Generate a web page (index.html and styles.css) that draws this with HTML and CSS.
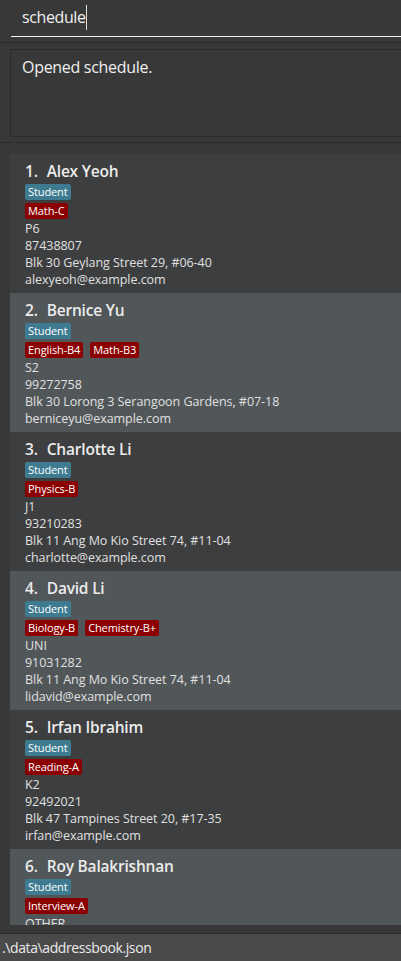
FILE: index.html
```html
<!DOCTYPE html>
<html>
<head>
<meta charset="utf-8">
<link rel="stylesheet" href="styles.css">
</head>
<body>
<div class="app">
  <div class="command-pane">
    <div class="command-field"><span class="command-text">schedule</span><span class="caret"></span></div>
  </div>
  <div class="result-pane">
    <div class="result-box">Opened schedule.</div>
  </div>
  <div class="list-pane">
    <div class="list">
      <div class="card odd">
        <div class="name-row"><span class="idx">1.</span><span class="name">Alex Yeoh</span></div>
        <div class="tags"><span class="tag role">Student</span></div>
        <div class="tags"><span class="tag subj">Math-C</span></div>
        <div class="line first">P6</div>
        <div class="line">87438807</div>
        <div class="line">Blk 30 Geylang Street 29, #06-40</div>
        <div class="line">alexyeoh@example.com</div>
      </div>
      <div class="card even">
        <div class="name-row"><span class="idx">2.</span><span class="name">Bernice Yu</span></div>
        <div class="tags"><span class="tag role">Student</span></div>
        <div class="tags"><span class="tag subj">English-B4</span><span class="tag subj">Math-B3</span></div>
        <div class="line first">S2</div>
        <div class="line">99272758</div>
        <div class="line">Blk 30 Lorong 3 Serangoon Gardens, #07-18</div>
        <div class="line">berniceyu@example.com</div>
      </div>
      <div class="card odd">
        <div class="name-row"><span class="idx">3.</span><span class="name">Charlotte Li</span></div>
        <div class="tags"><span class="tag role">Student</span></div>
        <div class="tags"><span class="tag subj">Physics-B</span></div>
        <div class="line first">J1</div>
        <div class="line">93210283</div>
        <div class="line">Blk 11 Ang Mo Kio Street 74, #11-04</div>
        <div class="line">charlotte@example.com</div>
      </div>
      <div class="card even">
        <div class="name-row"><span class="idx">4.</span><span class="name">David Li</span></div>
        <div class="tags"><span class="tag role">Student</span></div>
        <div class="tags"><span class="tag subj">Biology-B</span><span class="tag subj">Chemistry-B+</span></div>
        <div class="line first">UNI</div>
        <div class="line">91031282</div>
        <div class="line">Blk 11 Ang Mo Kio Street 74, #11-04</div>
        <div class="line">lidavid@example.com</div>
      </div>
      <div class="card odd">
        <div class="name-row"><span class="idx">5.</span><span class="name">Irfan Ibrahim</span></div>
        <div class="tags"><span class="tag role">Student</span></div>
        <div class="tags"><span class="tag subj">Reading-A</span></div>
        <div class="line first">K2</div>
        <div class="line">92492021</div>
        <div class="line">Blk 47 Tampines Street 20, #17-35</div>
        <div class="line">irfan@example.com</div>
      </div>
      <div class="card even">
        <div class="name-row"><span class="idx">6.</span><span class="name">Roy Balakrishnan</span></div>
        <div class="tags"><span class="tag role">Student</span></div>
        <div class="tags"><span class="tag subj">Interview-A</span></div>
        <div class="line first">OTHER</div>
      </div>
    </div>
  </div>
  <div class="status-bar">.\data\addressbook.json</div>
</div>
</body>
</html>
```
FILE: styles.css
```css
* { box-sizing: border-box; }
html, body {
  margin: 0;
  padding: 0;
  background: #383838;
  overflow: hidden;
}
body {
  font-family: "Open Sans", "Noto Sans", sans-serif;
  color: #e6e6e6;
}
.app {
  width: 401px;
  height: 961px;
  display: flex;
  flex-direction: column;
}
.command-pane {
  height: 43px;
  padding: 0 0 0 11px;
  border-bottom: 1px solid #2b2b2b;
  flex: none;
}
.command-field {
  height: 37px;
  border-bottom: 1px solid #f2f2f2;
  display: flex;
  align-items: center;
  padding-left: 11px;
  padding-bottom: 2px;
}
.command-text {
  font-size: 16px;
  color: #f0f0f0;
  letter-spacing: -0.4px;
}
.caret {
  display: inline-block;
  width: 1px;
  height: 25px;
  background: #dcdcdc;
}
.result-pane {
  height: 100px;
  padding: 6px 0 0 10px;
  border-bottom: 1px solid #2b2b2b;
  flex: none;
}
.result-box {
  height: 88px;
  border: 1px solid #2a2a2a;
  border-right: none;
  padding: 6px 0 0 11px;
  font-size: 16px;
  color: #f0f0f0;
  letter-spacing: -0.3px;
  line-height: 22px;
}
.list-pane {
  flex: 1;
  padding: 11px 0 8px 10px;
  min-height: 0;
  border-bottom: 1px solid #2b2b2b;
}
.list {
  height: 100%;
  overflow: hidden;
}
.card {
  height: 139px;
  padding: 7px 0 0 15px;
  display: flex;
  flex-direction: column;
}
.card.odd { background: #3c3e3f; }
.card.even { background: #515658; }
.name-row {
  height: 20px;
  display: flex;
  align-items: center;
  gap: 9px;
  font-weight: 600;
  font-size: 15.5px;
  color: #ececec;
  margin-bottom: 3px;
  letter-spacing: -0.2px;
}
.tags {
  height: 16px;
  display: flex;
  gap: 7px;
  margin-bottom: 3px;
}
.tag {
  height: 16px;
  line-height: 16px;
  padding: 0 3px;
  border-radius: 2px;
  font-size: 11px;
  color: #ffffff;
  letter-spacing: -0.1px;
}
.tag.role { background: #3e7b91; }
.tag.subj { background: #8b0000; }
.line {
  height: 17px;
  line-height: 17px;
  font-size: 12.5px;
  color: #e0e0e0;
  letter-spacing: -0.05px;
}
.line.first { margin-top: -2px; }
.status-bar {
  height: 27px;
  flex: none;
  background: #4a4a4a;
  padding-left: 2px;
  font-size: 14px;
  line-height: 28px;
  color: #eaeaea;
  letter-spacing: -0.4px;
}
```
